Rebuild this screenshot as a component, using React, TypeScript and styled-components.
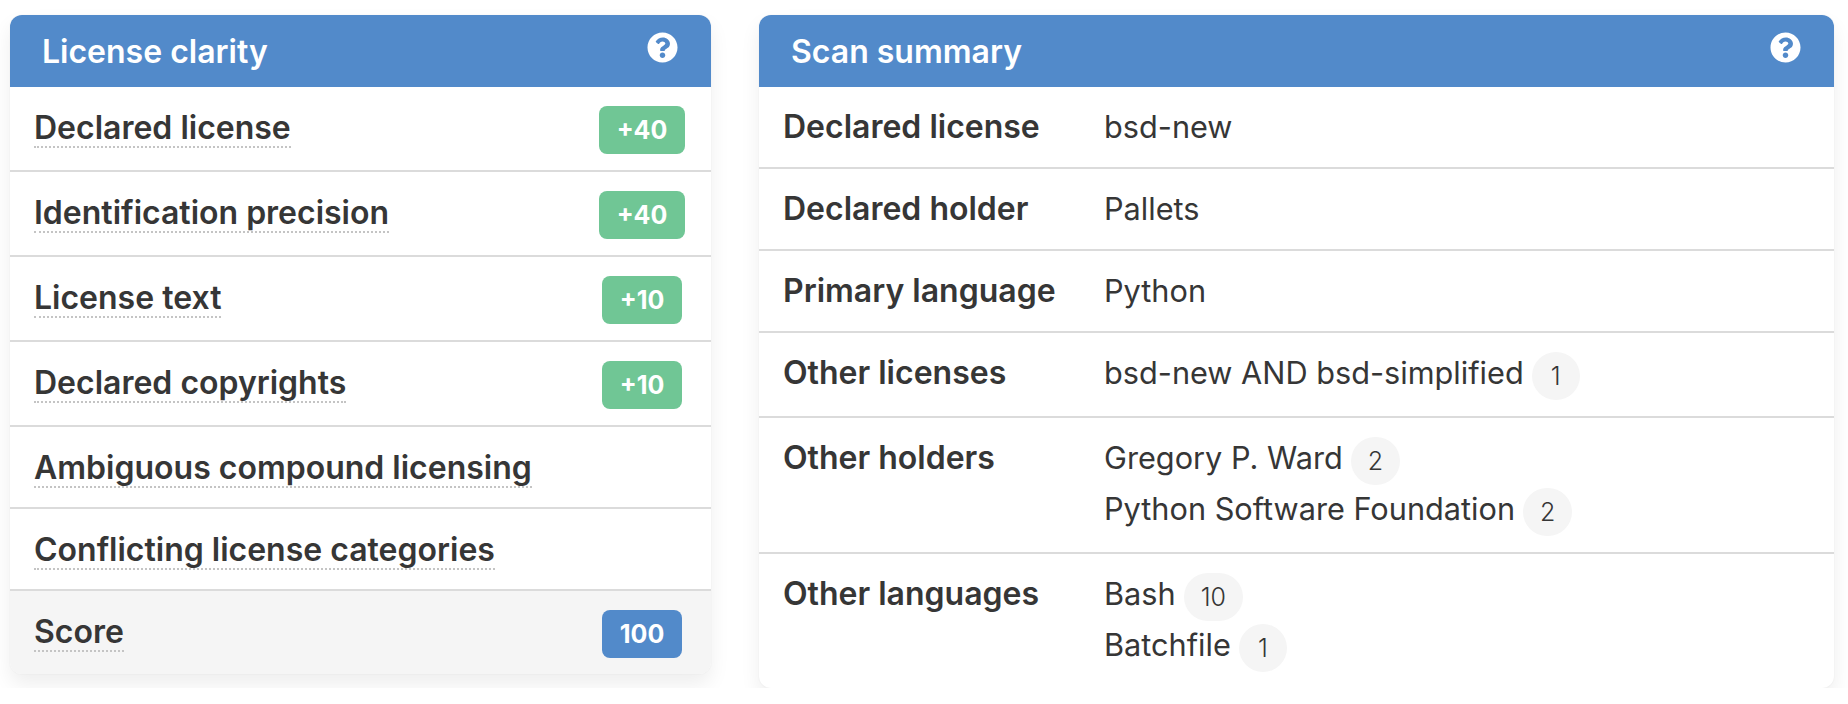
import styled, { createGlobalStyle } from "styled-components"
import { FaQuestionCircle } from "react-icons/fa"

const clarity = [
    { label: "Declared license", score: "+40" },
    { label: "Identification precision", score: "+40" },
    { label: "License text", score: "+10" },
    { label: "Declared copyrights", score: "+10" },
    { label: "Ambiguous compound licensing" },
    { label: "Conflicting license categories" },
]

const summary = [
    { label: "Declared license", values: [{ text: "bsd-new" }] },
    { label: "Declared holder", values: [{ text: "Pallets" }] },
    { label: "Primary language", values: [{ text: "Python" }] },
    { label: "Other licenses", values: [{ text: "bsd-new AND bsd-simplified", count: 1 }] },
    {
        label: "Other holders",
        values: [
            { text: "Gregory P. Ward", count: 2 },
            { text: "Python Software Foundation", count: 2 },
        ],
    },
    {
        label: "Other languages",
        values: [
            { text: "Bash", count: 10 },
            { text: "Batchfile", count: 1 },
        ],
    },
]

function App() {
    return (
        <>
            <GlobalStyle />
            <Page>
                <ClarityCard>
                    <Header>
                        <Title>License clarity</Title>
                        <HelpIcon />
                    </Header>
                    {clarity.map((row) => (
                        <ClarityRow key={row.label}>
                            <Hint>{row.label}</Hint>
                            {row.score && (
                                <ScoreCell>
                                    <Badge>{row.score}</Badge>
                                </ScoreCell>
                            )}
                        </ClarityRow>
                    ))}
                    <TotalRow>
                        <Hint>Score</Hint>
                        <ScoreCell>
                            <Badge $total>100</Badge>
                        </ScoreCell>
                    </TotalRow>
                </ClarityCard>
                <SummaryCard>
                    <Header>
                        <SummaryTitle>Scan summary</SummaryTitle>
                        <HelpIcon />
                    </Header>
                    {summary.map((row) => (
                        <SummaryRow key={row.label}>
                            <Label>{row.label}</Label>
                            <Values>
                                {row.values.map((value) => (
                                    <Value key={value.text}>
                                        {value.text}
                                        {value.count && <Pill>{value.count}</Pill>}
                                    </Value>
                                ))}
                            </Values>
                        </SummaryRow>
                    ))}
                </SummaryCard>
            </Page>
        </>
    )
}

export default App

const GlobalStyle = createGlobalStyle`
    html, body {
        margin: 0;
        background: #fff;
    }
    body {
        font-family: Inter, "Liberation Sans", sans-serif;
        color: #363636;
    }
`

const Page = styled.div`
    display: flex;
    align-items: flex-start;
    gap: 48px;
    padding: 15px 14px 0 10px;
`

const Card = styled.div`
    background: #fff;
    border-radius: 12px;
    box-shadow: 0 10px 20px rgba(10, 10, 10, 0.07), 0 0 2px rgba(10, 10, 10, 0.06);
    overflow: hidden;
`

const ClarityCard = styled(Card)`
    width: 701px;
    flex: none;
`

const SummaryCard = styled(Card)`
    flex: 1;
`

const Header = styled.div`
    height: 72px;
    display: flex;
    justify-content: space-between;
    padding: 17px 33px 0 32px;
    box-sizing: border-box;
    background: #528aca;
    color: #fff;
`

const Title = styled.div`
    font-size: 32px;
    font-weight: 600;
    line-height: 40px;
`

const SummaryTitle = styled(Title)`
    margin-left: 0;
`

const HelpIcon = styled(FaQuestionCircle)`
    width: 31px;
    height: 31px;
`

const ClarityRow = styled.div`
    display: flex;
    justify-content: space-between;
    align-items: flex-start;
    padding: 17px 26px 17px 24px;
    line-height: 46px;
    font-size: 32px;
    border-bottom: 2px solid #dbdbdb;
`

const TotalRow = styled(ClarityRow)`
    background: #f5f5f5;
    border-bottom: none;
`

const Hint = styled.span`
    font-weight: 600;
    line-height: 36px;
    margin: 2px 0 2px;
    padding-top: 4px;
    border-bottom: 2px dotted #c4c4c4;
`

const ScoreCell = styled.div`
    width: 86px;
    display: flex;
    justify-content: center;
    margin: 2px 0 -1px;
`

const Badge = styled.span<{ $total?: boolean }>`
    height: 48px;
    padding: 0 18px;
    display: flex;
    align-items: center;
    border-radius: 8px;
    font-size: 25px;
    font-weight: 700;
    color: #fff;
    background: ${(p) => (p.$total ? "#528aca" : "#70c695")};
`

const SummaryRow = styled.div`
    display: flex;
    padding: 17px 24px;
    font-size: 30.7px;
    line-height: 46px;
    border-bottom: 2px solid #dbdbdb;

    &:last-child {
        border-bottom: none;
    }
`

const Label = styled.div`
    width: 321px;
    flex: none;
    font-size: 32px;
    font-weight: 600;
`

const Values = styled.div`
    display: flex;
    flex-direction: column;
    gap: 2px;
`

const Value = styled.div`
    display: flex;
    align-items: flex-start;
`

const Pill = styled.span`
    min-width: 48px;
    height: 48px;
    margin: 2px 0 -1px 8px;
    display: flex;
    align-items: center;
    justify-content: center;
    box-sizing: border-box;
    padding: 0 17px;
    border-radius: 24px;
    background: #f5f5f5;
    font-size: 25px;
    font-weight: 300;
    color: #363636;
`
